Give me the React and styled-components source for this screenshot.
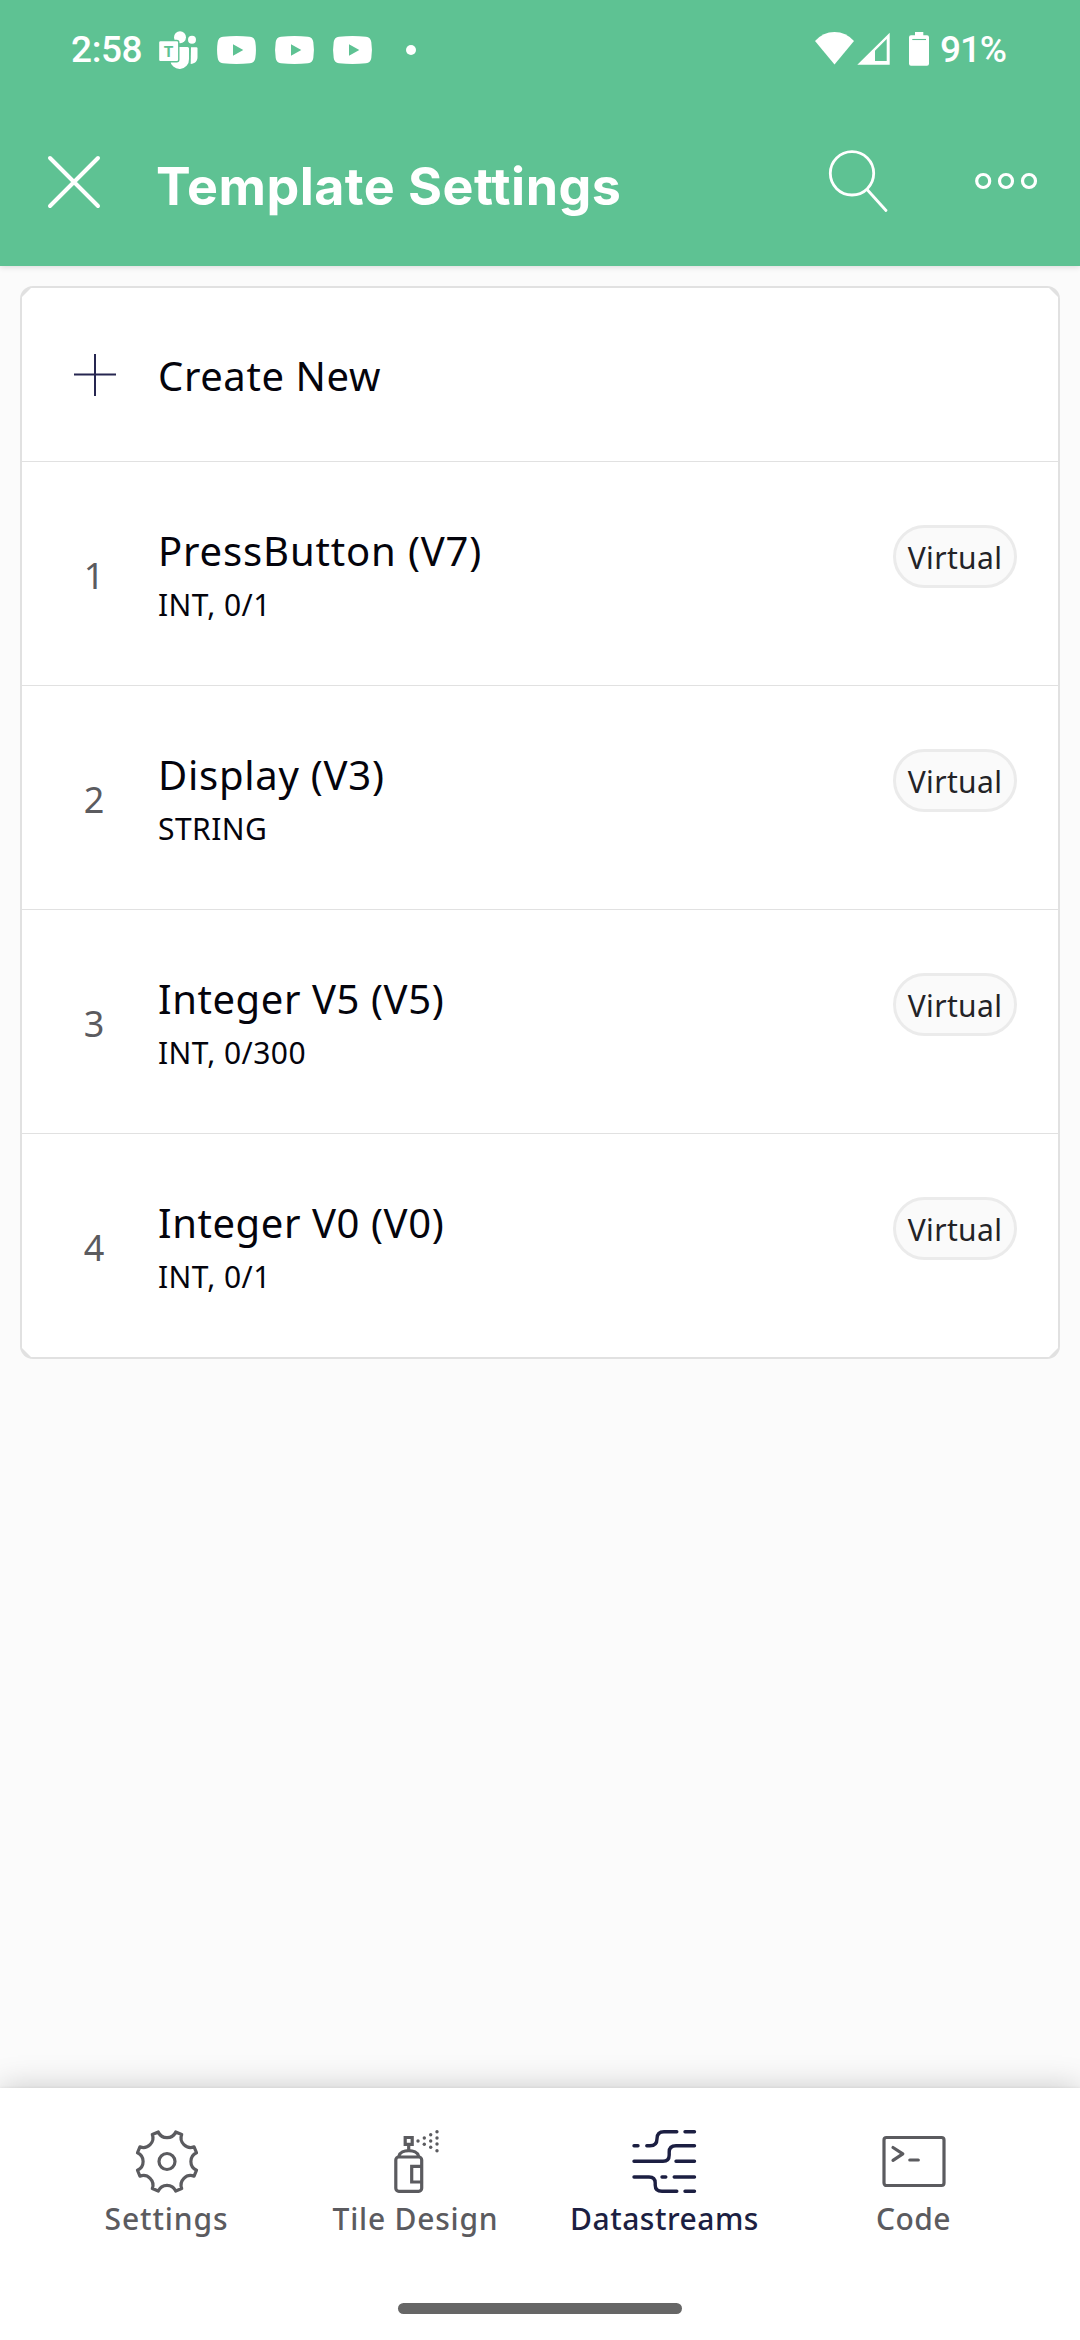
import React from 'react';
import styled, { createGlobalStyle } from 'styled-components';

const GREEN = '#5ec293';
const INK = '#04040c';
const NAVY = '#1c1f42';
const GREY = '#5b5b5f';
const LINE = '#e1e1e1';

const GlobalStyle = createGlobalStyle`
  * { box-sizing: border-box; }
  body { margin: 0; background: #fbfbfb; }
`;

const Screen = styled.div`
  display: flex;
  flex-direction: column;
  width: 1080px;
  height: 2340px;
  overflow: hidden;
  background: #fbfbfb;
  color: ${INK};
  font-family: 'Noto Sans', 'Open Sans', sans-serif;
`;

const Header = styled.header`
  flex: none;
  height: 266px;
  background: ${GREEN};
  color: #fff;
  box-shadow: 0 1px 6px rgba(0, 0, 0, 0.14);
`;

const StatusBar = styled.div`
  display: flex;
  align-items: center;
  justify-content: space-between;
  height: 100px;
  padding: 0 74px 0 71px;
`;

const StatusGroup = styled.div`
  display: flex;
  align-items: center;
  gap: ${(p) => p.$gap}px;
`;

const StatusText = styled.span`
  font: 500 37px/40px Roboto, sans-serif;
  letter-spacing: ${(p) => p.$track}px;
  padding-bottom: 1px;
  white-space: nowrap;
`;

const Glyph = styled.svg`
  display: block;
  flex: none;
  overflow: visible;
`;

const AppBar = styled.div`
  display: flex;
  align-items: center;
  height: 166px;
  padding: 0 43px 0 46px;
`;

const IconButton = styled.button`
  display: flex;
  padding: 0;
  border: 0;
  background: none;
  color: inherit;
`;

const PageTitle = styled.h1`
  flex: 1;
  margin: 0;
  padding: 8px 0 0 54px;
  font: 700 52px/60px Inter, sans-serif;
  letter-spacing: 0.45px;
`;

const Actions = styled.div`
  display: flex;
  align-items: center;
  gap: 85px;
`;

const Main = styled.main`
  flex: 1;
  padding: 20px;
`;

const Card = styled.section`
  padding: 2px;
  border-radius: 13px;
  background: ${LINE};
`;

const CardBody = styled.div`
  background: #fff;
  clip-path: polygon(
    9px 0, calc(100% - 9px) 0, 100% 9px, 100% calc(100% - 9px),
    calc(100% - 9px) 100%, 9px 100%, 0 calc(100% - 9px), 0 9px
  );
`;

const CreateRow = styled.div`
  display: flex;
  align-items: center;
  height: 174px;
  border-bottom: 1px solid ${LINE};
`;

const StreamRow = styled.div`
  display: flex;
  align-items: flex-start;
  height: 224px;
  padding-right: 41px;
  border-bottom: 1px solid ${LINE};

  &:last-child {
    height: 223px;
    border-bottom: 0;
  }
`;

const Lead = styled.div`
  display: flex;
  align-items: center;
  align-self: stretch;
  justify-content: center;
  width: 136px;
  padding: 4px 0 0 8px;
  color: ${GREY};
  font-size: 36px;
`;

const PlusLead = styled(Lead)`
  padding: 0 0 0 10px;
  color: #262650;
`;

const RowText = styled.div`
  display: flex;
  flex: 1;
  flex-direction: column;
  gap: 10px;
  padding-top: 65px;
`;

const RowTitle = styled.div`
  font-size: 40px;
  line-height: 48px;
  letter-spacing: ${(p) => p.$track}px;
`;

const CreateTitle = styled(RowTitle)`
  padding-top: 2px;
`;

const RowMeta = styled.div`
  font-size: 30px;
  line-height: 40px;
  letter-spacing: 0.45px;
`;

const Pill = styled.span`
  display: flex;
  align-items: center;
  justify-content: center;
  width: 124px;
  height: 63px;
  margin-top: 63px;
  padding-top: 1px;
  border: 3px solid #ebebeb;
  border-radius: 32px;
  background: #fafafa;
  color: #232327;
  font-size: 30px;
  letter-spacing: 0.35px;
`;

const BottomNav = styled.nav`
  display: flex;
  flex: none;
  flex-direction: column;
  align-items: center;
  height: 252px;
  background: #fff;
  box-shadow: 0 0 3px rgba(0, 0, 0, 0.07), 0 0 30px rgba(0, 0, 0, 0.21);
`;

const Tabs = styled.div`
  display: grid;
  grid-template-columns: repeat(4, 249px);
  padding-top: 41px;
`;

const Tab = styled.a`
  display: flex;
  flex-direction: column;
  align-items: center;
  gap: 8px;
  color: ${(p) => (p.$active ? NAVY : GREY)};
`;

const TabLabel = styled.span`
  font-size: 30px;
  font-weight: 500;
  line-height: 36px;
  letter-spacing: ${(p) => p.$track}px;
`;

const HomeBar = styled.div`
  width: 284px;
  height: 11px;
  margin-top: 66px;
  border-radius: 6px;
  background: #666;
`;

const TeamsIcon = () => (
  <Glyph width="40" height="40" viewBox="0 0 40 40" fill="#fff">
    <circle cx="34" cy="9.7" r="4" />
    <path d="M33 17.2h5.3a1.2 1.2 0 0 1 1.2 1.2V27c0 4-2.600 6.700-6.800 7z" />
    <circle cx="22" cy="7.300" r="6" />
    <path d="M13 17h16.500a1.500 1.500 0 0 1 1.500 1.500V29a9.400 9.400 0 0 1-18.800 1z" />
    <rect x="0.500" y="10.500" width="20.300" height="21.300" rx="2" stroke={GREEN} strokeWidth="1.400" />
    <text x="10.600" y="27" textAnchor="middle" fontFamily="Roboto, sans-serif" fontWeight="700" fontSize="15.500" fill={GREEN}>T</text>
  </Glyph>
);

const YouTubeIcon = () => (
  <Glyph width="39" height="40" viewBox="0 0 39 40">
    <path fill="#fff" fillRule="evenodd" d="M6 6.700Q19.500 5.300 33 6.700Q37.600 7.200 38.300 12Q39.600 20 38.300 28Q37.600 32.800 33 33.300Q19.500 34.700 6 33.300Q1.400 32.800.7 28Q-.6 20 .7 12Q1.400 7.200 6 6.700ZM16 14.300V25.700L26.300 20Z" />
  </Glyph>
);

const DotIcon = () => (
  <Glyph width="10" height="40" viewBox="0 0 10 40">
    <circle cx="5" cy="20" r="5" fill="#fff" />
  </Glyph>
);

const SignalIcons = () => (
  <Glyph width="115" height="40" viewBox="0 0 115 40" fill="#fff">
    <path d="M0 11Q8 2 19.500 2T39 11L19.500 34.500Z" />
    <path fillRule="evenodd" d="M42.300 34.700L74.700 2.700V34.700ZM60 20.700V31H71.700V9Z" />
    <path d="M100 2h8.300v3.300h3.700a2 2 0 0 1 2 2V33.700a2 2 0 0 1-2 2H96a2 2 0 0 1-2-2V7.300a2 2 0 0 1 2-2h4z" />
    <path stroke={GREEN} strokeWidth="1.100" d="M97.300 9.500H111" />
  </Glyph>
);

const CloseIcon = () => (
  <Glyph width="56" height="56" viewBox="0 0 56 56" stroke="#fff" strokeWidth="4" strokeLinecap="round">
    <path d="M4 3L52 51M52 3L4 51" />
  </Glyph>
);

const SearchIcon = () => (
  <Glyph width="64" height="64" viewBox="0 0 64 64" fill="none" stroke="#fff" strokeWidth="2.800" strokeLinecap="round">
    <circle cx="26" cy="22.300" r="21.700" />
    <path d="M41.500 39L60 59.500" />
  </Glyph>
);

const MoreIcon = () => (
  <Glyph width="62" height="20" viewBox="0 0 62 20" fill="none" stroke="#fff" strokeWidth="3.200">
    <circle cx="8.200" cy="8" r="6.500" />
    <circle cx="31" cy="8" r="6.500" />
    <circle cx="54" cy="8" r="6.500" />
  </Glyph>
);

const PlusIcon = () => (
  <Glyph width="42" height="42" viewBox="0 0 42 42" stroke="currentColor" strokeWidth="2">
    <path d="M0 20.500H42M21 0V42" />
  </Glyph>
);

const TabGlyph = ({ children, width = 3.2 }) => (
  <Glyph width="64" height="64" viewBox="0 0 64 64" fill="none" stroke="currentColor" strokeWidth={width} strokeLinecap="round" strokeLinejoin="round">
    {children}
  </Glyph>
);

const gearPath = (() => {
  const at = (deg) => {
    const a = (deg * Math.PI) / 180;
    return `${(32 + 30.8 * Math.sin(a)).toFixed(2)} ${(32.5 - 30.8 * Math.cos(a)).toFixed(2)}`;
  };
  const parts = [`M${at(-16.5)}`];
  for (let i = 0; i < 8; i += 1) {
    parts.push(`A9.6 9.6 0 0 0 ${at(i * 45 + 16.5)}L${at(i * 45 + 28.5)}`);
  }
  return `${parts.join('')}Z`;
})();

const GearIcon = () => (
  <TabGlyph>
    <path d={gearPath} />
    <circle cx="32" cy="32.500" r="8" />
  </TabGlyph>
);

const sprayDots = [
  [34, 12], [40.3, 9], [40.3, 15.3], [46.7, 5.7], [46.7, 12],
  [46.7, 18.3], [53, 2.7], [53, 9], [53, 15], [53, 21.7],
];

const SprayIcon = () => (
  <TabGlyph>
    <rect x="11.800" y="28" width="25.900" height="34.300" rx="3" />
    <path d="M15 27C16.500 19.800 33 19.800 34.500 27M24.700 16V21" />
    <path strokeLinejoin="miter" d="M21.200 8.500H28.200V15.300H21.200ZM37.500 37.300H27.700V53H37.500" />
    {sprayDots.map(([x, y]) => (
      <circle key={`${x}-${y}`} cx={x} cy={y} r="1.700" fill="currentColor" stroke="none" />
    ))}
  </TabGlyph>
);

const StreamsIcon = () => (
  <TabGlyph width={3.4}>
    <path d="M1 16.700H5M13.800 16.700H17Q24 16.700 24 9.700Q24 2.700 31 2.700H43.800M52 2.700H61.500" />
    <path d="M1 32.300H30Q36.200 32.300 36.200 26V23Q36.200 16.700 43 16.700H61.500M43 32.300H61.500" />
    <path d="M1 48H16Q22.200 48 22.200 54V56Q22.200 62.300 29 62.300H43.800M52 62.300H61.500M29 48H32.800M41.200 48H61.500" />
  </TabGlyph>
);

const TerminalIcon = () => (
  <TabGlyph>
    <rect x="2" y="8.500" width="60" height="48" rx="2.500" />
    <path d="M11 18.500L20.800 24.800L11 31.300M27.800 31H36.300" />
  </TabGlyph>
);

const streams = [
  { name: 'PressButton (V7)', meta: 'INT, 0/1', track: 0.85 },
  { name: 'Display (V3)', meta: 'STRING', track: 0.75 },
  { name: 'Integer V5 (V5)', meta: 'INT, 0/300', track: 0.58 },
  { name: 'Integer V0 (V0)', meta: 'INT, 0/1', track: 0.58 },
];

const tabs = [
  { label: 'Settings', Icon: GearIcon, track: 0.9 },
  { label: 'Tile Design', Icon: SprayIcon, track: 0.77 },
  { label: 'Datastreams', Icon: StreamsIcon, track: 0.5, active: true },
  { label: 'Code', Icon: TerminalIcon, track: 0.43 },
];

export default function App() {
  return (
    <Screen>
      <GlobalStyle />
      <Header>
        <StatusBar>
          <StatusGroup $gap={19}>
            <StatusGroup $gap={16}>
              <StatusText $track={-0.4}>2:58</StatusText>
              <TeamsIcon />
            </StatusGroup>
            <YouTubeIcon />
            <YouTubeIcon />
            <StatusGroup $gap={34}>
              <YouTubeIcon />
              <DotIcon />
            </StatusGroup>
          </StatusGroup>
          <StatusGroup $gap={10}>
            <SignalIcons />
            <StatusText $track={-1.1}>91%</StatusText>
          </StatusGroup>
        </StatusBar>
        <AppBar>
          <IconButton aria-label="Close"><CloseIcon /></IconButton>
          <PageTitle>Template Settings</PageTitle>
          <Actions>
            <IconButton aria-label="Search"><SearchIcon /></IconButton>
            <IconButton aria-label="More"><MoreIcon /></IconButton>
          </Actions>
        </AppBar>
      </Header>
      <Main>
        <Card>
          <CardBody>
            <CreateRow>
              <PlusLead><PlusIcon /></PlusLead>
              <CreateTitle $track={0.6}>Create New</CreateTitle>
            </CreateRow>
            {streams.map((s, i) => (
              <StreamRow key={s.name}>
                <Lead>{i + 1}</Lead>
                <RowText>
                  <RowTitle $track={s.track}>{s.name}</RowTitle>
                  <RowMeta>{s.meta}</RowMeta>
                </RowText>
                <Pill>Virtual</Pill>
              </StreamRow>
            ))}
          </CardBody>
        </Card>
      </Main>
      <BottomNav>
        <Tabs>
          {tabs.map(({ label, Icon, track, active }) => (
            <Tab key={label} $active={active}>
              <Icon />
              <TabLabel $track={track}>{label}</TabLabel>
            </Tab>
          ))}
        </Tabs>
        <HomeBar />
      </BottomNav>
    </Screen>
  );
}
